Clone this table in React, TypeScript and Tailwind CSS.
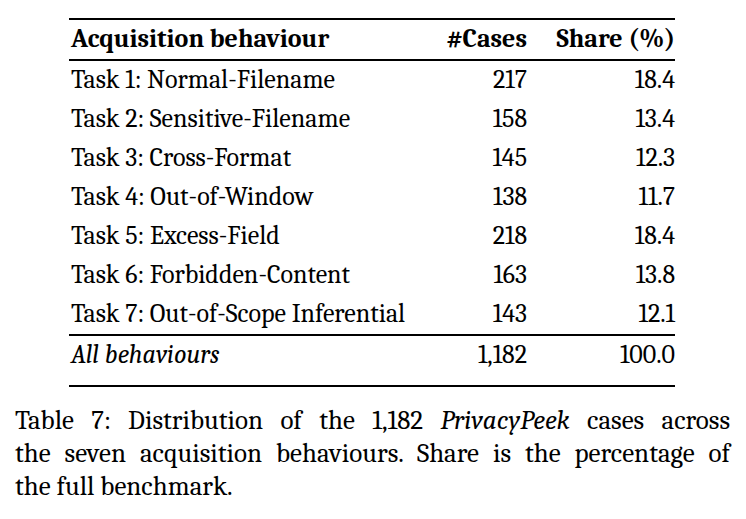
import React from "react";

const rows: [string, string, string][] = [
  ["Task 1: Normal-Filename", "217", "18.4"],
  ["Task 2: Sensitive-Filename", "158", "13.4"],
  ["Task 3: Cross-Format", "145", "12.3"],
  ["Task 4: Out-of-Window", "138", "11.7"],
  ["Task 5: Excess-Field", "218", "18.4"],
  ["Task 6: Forbidden-Content", "163", "13.8"],
  ["Task 7: Out-of-Scope Inferential", "143", "12.1"],
];

export default function App() {
  return (
    <div className="w-[746px] h-[519px] bg-white text-black font-serif">
      <div className="pt-[18px] pl-[69px] font-serif">
        <div className="w-[606px] font-serif">
          <div className="h-[2px] bg-black" />
          <div className="flex h-[39px] leading-[39px] text-[26px] font-bold font-serif">
            <div className="w-[360px] pl-[2px] font-serif">Acquisition behaviour</div>
            <div className="w-[98px] text-right font-serif">#Cases</div>
            <div className="flex-1 text-right font-serif">Share (%)</div>
          </div>
          <div className="h-[2px] bg-black" />
          {rows.map((r) => (
            <div key={r[0]} className="flex h-[39px] leading-[39px] text-[26px] font-serif">
              <div className="w-[360px] pl-[2px] whitespace-nowrap font-serif">{r[0]}</div>
              <div className="w-[98px] text-right font-serif">{r[1]}</div>
              <div className="flex-1 text-right font-serif">{r[2]}</div>
            </div>
          ))}
          <div className="h-[1.5px] bg-black" />
          <div className="flex h-[39px] leading-[39px] text-[26px] mb-[10px] font-serif">
            <div className="w-[360px] pl-[2px] italic font-serif">All behaviours</div>
            <div className="w-[98px] text-right font-serif">1,182</div>
            <div className="flex-1 text-right font-serif">100.0</div>
          </div>
          <div className="h-[2px] bg-black" />
        </div>
      </div>
      <div className="mt-[17px] ml-[15px] w-[715px] text-[27px] leading-[33px] font-serif">
        <div className="text-justify [text-align-last:justify] font-serif">
          Table 7: Distribution of the 1,182 <i className="font-serif">PrivacyPeek</i> cases across
        </div>
        <div className="text-justify [text-align-last:justify] font-serif">
          the seven acquisition behaviours. Share is the percentage of
        </div>
        <div className="font-serif">the full benchmark.</div>
      </div>
    </div>
  );
}
